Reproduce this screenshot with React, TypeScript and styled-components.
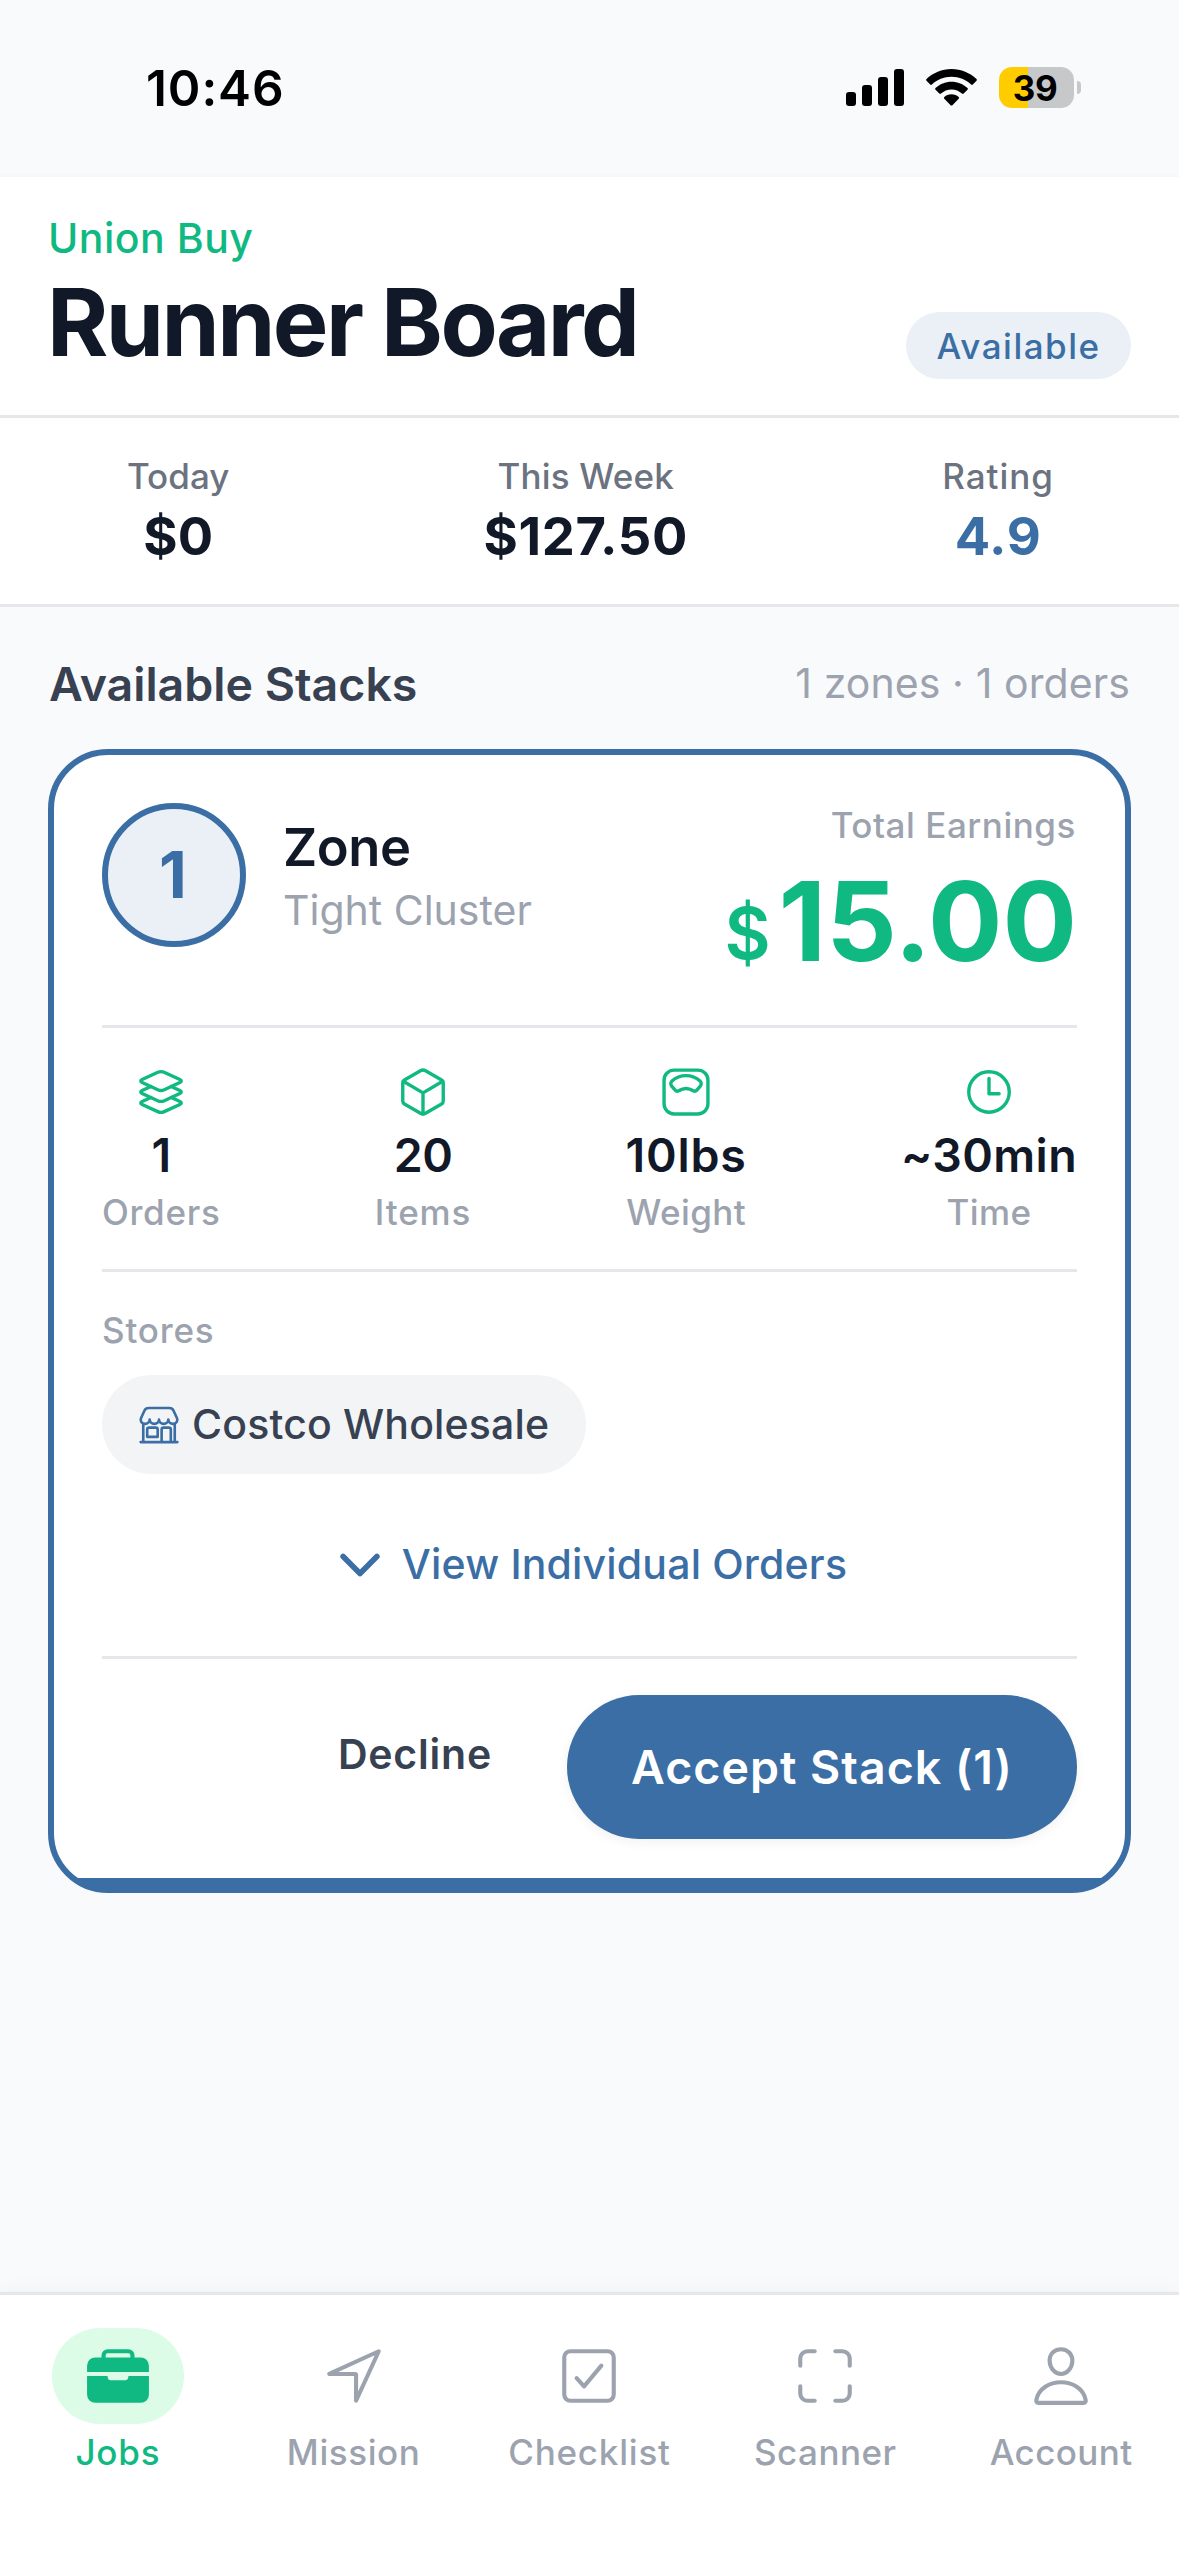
import React from "react";
import styled, { createGlobalStyle } from "styled-components";
import {
  IoBriefcase,
  IoCheckboxOutline,
  IoChevronDown,
  IoCubeOutline,
  IoLayersOutline,
  IoNavigateOutline,
  IoPersonOutline,
  IoScaleOutline,
  IoScanOutline,
  IoStorefrontOutline,
  IoTimeOutline,
} from "react-icons/io5";

const color = {
  ink: "#111827",
  slate: "#374151",
  muted: "#6b7280",
  faint: "#9ca3af",
  line: "#e5e7eb",
  page: "#f9fafb",
  blue: "#3b6ea5",
  blueTint: "#ebf0f6",
  green: "#10b981",
  greenTint: "#dcfce7",
};

const GlobalStyle = createGlobalStyle`
  *, *::before, *::after { box-sizing: border-box; }
  body {
    margin: 0;
    background: ${color.page};
    font-family: Inter, "Liberation Sans", sans-serif;
  }
  button { font: inherit; border: 0; padding: 0; background: none; }
  svg { display: block; flex: none; }
`;

interface TextProps {
  $size: number;
  $line: number;
  $weight?: number;
  $color?: string;
  $track?: number;
}

const Text = styled.span<TextProps>`
  display: block;
  white-space: nowrap;
  font-size: ${(p) => p.$size}px;
  line-height: ${(p) => p.$line}px;
  font-weight: ${(p) => p.$weight ?? 500};
  color: ${(p) => p.$color ?? color.ink};
  letter-spacing: ${(p) => p.$track ?? 0}px;
`;

const Screen = styled.div`
  width: 1179px;
  height: 2556px;
  display: flex;
  flex-direction: column;
  overflow: hidden;
  background: ${color.page};
`;

/* Status bar */

const StatusBar = styled.div`
  height: 177px;
  flex: none;
  display: flex;
  align-items: center;
  justify-content: space-between;
  padding: 0 98px 2px 146px;
`;

const StatusIcons = styled.div`
  display: flex;
  align-items: center;
`;

const WifiSlot = styled.div`
  margin: 0 22px;
`;

const Battery = styled.div`
  width: 75px;
  height: 41px;
  border-radius: 13px;
  display: flex;
  align-items: center;
  justify-content: center;
  padding: 1px 3px 0 0;
  background: linear-gradient(90deg, #ffcc00 39%, #c7c8c9 39%);
`;

const BatteryTip = styled.div`
  width: 4px;
  height: 13px;
  margin-left: 3px;
  border-radius: 0 4px 4px 0;
  background: #c7c8c9;
`;

/* Header */

const Header = styled.header`
  height: 241px;
  flex: none;
  display: flex;
  align-items: flex-end;
  justify-content: space-between;
  padding: 0 48px 36px 47px;
  background: #fff;
  border-bottom: 3px solid ${color.line};
  box-shadow: 0 0 6px rgba(0, 0, 0, 0.03);
`;

const Titles = styled.div`
  display: flex;
  flex-direction: column;
  gap: 2px;
`;

const Brand = styled(Text)`
  padding-left: 1px;
`;

const Title = styled.h1`
  margin: 0;
  white-space: nowrap;
  font-size: 93.5px;
  line-height: 114px;
  font-weight: 700;
  letter-spacing: -2.55px;
  color: ${color.ink};
`;

const StatusPill = styled.div`
  width: 225px;
  height: 67px;
  border-radius: 34px;
  display: flex;
  align-items: center;
  justify-content: center;
  padding-top: 2px;
  background: ${color.blueTint};
`;

const Summary = styled.section`
  height: 189px;
  flex: none;
  display: flex;
  justify-content: space-between;
  padding: 36px 125px 0 127px;
  background: #fff;
  border-bottom: 3px solid ${color.line};
`;

const Stat = styled.div`
  display: flex;
  flex-direction: column;
  align-items: center;
`;

/* Stacks list */

const Main = styled.main`
  flex: 1;
  padding: 48px 48px 0;
`;

const SectionHead = styled.div`
  display: flex;
  justify-content: space-between;
  padding: 0 1px;
  margin-bottom: 36px;
`;

/* The thick bottom accent is painted under the border so both read as one shape. */
const Card = styled.article`
  border: 6px solid ${color.blue};
  border-radius: 60px;
  padding: 48px;
  background:
    linear-gradient(${color.blue}, ${color.blue}) bottom / 100% 15px no-repeat border-box,
    #fff;
`;

const CardHead = styled.div`
  height: 225px;
  display: flex;
  align-items: flex-start;
  justify-content: space-between;
  border-bottom: 3px solid ${color.line};
`;

const Zone = styled.div`
  display: flex;
  gap: 37px;
`;

const ZoneBadge = styled.div`
  width: 144px;
  height: 144px;
  border: 6px solid ${color.blue};
  border-radius: 50%;
  display: flex;
  align-items: center;
  justify-content: center;
  padding-right: 2px;
  background: ${color.blueTint};
`;

const ZoneName = styled.div`
  padding-top: 7px;
`;

const Earnings = styled.div`
  display: flex;
  flex-direction: column;
  align-items: flex-end;
`;

const EarningsLabel = styled(Text)`
  padding-right: 1px;
`;

const Amount = styled.div`
  display: flex;
  align-items: center;
  gap: 8px;
`;

const Currency = styled(Text)`
  margin-top: 24px;
`;

const Metrics = styled.div`
  display: flex;
  justify-content: space-between;
  padding: 37px 0 35px;
  border-bottom: 3px solid ${color.line};
`;

const Metric = styled.div`
  display: flex;
  flex-direction: column;
  align-items: center;
  color: ${color.green};
`;

const Stores = styled.div`
  display: flex;
  flex-direction: column;
  align-items: flex-start;
  gap: 23px;
  padding-top: 37px;
`;

const StoreChip = styled.div`
  height: 99px;
  border-radius: 50px;
  display: flex;
  align-items: center;
  gap: 12px;
  padding: 0 37px 0 36px;
  background: #f3f4f6;
  color: ${color.blue};
`;

const StoreName = styled(Text)`
  padding-bottom: 2px;
`;

const Expander = styled.button`
  width: 100%;
  height: 182px;
  display: flex;
  align-items: center;
  justify-content: center;
  gap: 12px;
  padding-right: 2px;
  color: ${color.blue};
`;

const ExpanderLabel = styled(Text)`
  padding-bottom: 2px;
`;

const Actions = styled.div`
  display: flex;
  align-items: flex-start;
  justify-content: flex-end;
  gap: 36px;
  padding-top: 36px;
  border-top: 3px solid ${color.line};
`;

const DeclineButton = styled.button`
  padding: 0 39px;
`;

const AcceptButton = styled.button`
  width: 510px;
  height: 144px;
  border-radius: 72px;
  display: flex;
  align-items: center;
  justify-content: center;
  background: ${color.blue};
  box-shadow: 0 3px 12px rgba(0, 0, 0, 0.06);
`;

/* Tab bar */

const TabBar = styled.nav`
  height: 264px;
  flex: none;
  display: grid;
  grid-template-columns: repeat(5, 1fr);
  padding-top: 33px;
  background: #fff;
  border-top: 3px solid ${color.line};
  box-shadow: 0 -3px 18px rgba(0, 0, 0, 0.035);
`;

const Tab = styled.div<{ $active?: boolean }>`
  display: flex;
  flex-direction: column;
  align-items: center;
  gap: 7px;
  color: ${(p) => (p.$active ? color.green : color.faint)};
`;

const TabIcon = styled.div<{ $active?: boolean }>`
  width: 132px;
  height: 96px;
  border-radius: 48px;
  display: flex;
  align-items: center;
  justify-content: center;
  background: ${(p) => (p.$active ? color.greenTint : "transparent")};
`;

const Signal = () => (
  <svg width="58" height="37" viewBox="0 0 58 37">
    <rect x="0" y="23" width="10" height="14" rx="3" />
    <rect x="16" y="16" width="10" height="21" rx="3" />
    <rect x="32" y="8" width="10" height="29" rx="3" />
    <rect x="48" y="0" width="10" height="37" rx="3" />
  </svg>
);

const Wifi = () => (
  <svg width="51" height="37" viewBox="0 0 51 37">
    <path d="M25.5 0C35.2 0 44 3.800 50.500 10.100c.5.5.5 1.200 0 1.700l-3.700 3.700c-.5.5-1.200.5-1.700 0C40 10.600 33.100 7.700 25.500 7.700S11 10.600 5.900 15.500c-.5.5-1.200.5-1.700 0L.5 11.800c-.5-.5-.5-1.200 0-1.700C7 3.800 15.800 0 25.500 0Z" />
    <path d="M25.500 12.700c6.200 0 11.800 2.400 16 6.300.5.500.5 1.200 0 1.700l-3.800 3.800c-.4.500-1.200.5-1.700 0-2.800-2.500-6.500-4.100-10.500-4.100s-7.700 1.600-10.500 4.100c-.5.500-1.300.5-1.700 0l-3.800-3.800c-.5-.5-.5-1.200 0-1.700 4.200-3.900 9.800-6.300 16-6.300Z" />
    <path d="M25.500 25.300c2.800 0 5.300 1 7.200 2.700.5.500.5 1.200 0 1.700l-6.300 6.500c-.5.500-1.300.5-1.800 0l-6.300-6.500c-.5-.5-.5-1.200 0-1.700 1.900-1.700 4.400-2.700 7.200-2.700Z" />
  </svg>
);

const stats = [
  { label: "Today", track: 0, value: "$0", valueTrack: 0, tone: color.ink },
  { label: "This Week", track: 0.2, value: "$127.50", valueTrack: 0.6, tone: color.ink },
  { label: "Rating", track: 1.0, value: "4.9", valueTrack: 0.7, tone: color.blue },
];

const metrics = [
  { Icon: IoLayersOutline, value: "1", valueTrack: 0, label: "Orders", track: 0.7 },
  { Icon: IoCubeOutline, value: "20", valueTrack: -0.5, label: "Items", track: 0.9 },
  { Icon: IoScaleOutline, value: "10lbs", valueTrack: 0.8, label: "Weight", track: 0.4 },
  { Icon: IoTimeOutline, value: "~30min", valueTrack: 0.4, label: "Time", track: 0.4 },
];

const tabs = [
  { Icon: IoBriefcase, label: "Jobs", track: 0.8, active: true },
  { Icon: IoNavigateOutline, label: "Mission", track: 0.6 },
  { Icon: IoCheckboxOutline, label: "Checklist", track: 0.8 },
  { Icon: IoScanOutline, label: "Scanner", track: 0.5 },
  { Icon: IoPersonOutline, label: "Account", track: 0.4 },
];

export default function App() {
  return (
    <Screen>
      <GlobalStyle />

      <StatusBar>
        <Text $size={49.5} $line={60} $weight={600} $color="#000" $track={0.9}>
          10:46
        </Text>
        <StatusIcons>
          <Signal />
          <WifiSlot>
            <Wifi />
          </WifiSlot>
          <Battery>
            <Text $size={35} $line={40} $weight={700} $color="#000" $track={-0.4}>
              39
            </Text>
          </Battery>
          <BatteryTip />
        </StatusIcons>
      </StatusBar>

      <Header>
        <Titles>
          <Brand $size={41} $line={50} $color={color.green} $track={0.5}>
            Union Buy
          </Brand>
          <Title>Runner Board</Title>
        </Titles>
        <StatusPill>
          <Text $size={35} $line={43} $color={color.blue} $track={1.5}>
            Available
          </Text>
        </StatusPill>
      </Header>

      <Summary>
        {stats.map((s) => (
          <Stat key={s.label}>
            <Text $size={35} $line={44} $color={color.muted} $track={s.track}>
              {s.label}
            </Text>
            <Text $size={52.5} $line={77} $weight={700} $color={s.tone} $track={s.valueTrack}>
              {s.value}
            </Text>
          </Stat>
        ))}
      </Summary>

      <Main>
        <SectionHead>
          <Text $size={46.5} $line={58} $weight={600} $color={color.slate}>
            Available Stacks
          </Text>
          <Text $size={41} $line={56} $weight={400} $color={color.faint} $track={0.09}>
            1 zones · 1 orders
          </Text>
        </SectionHead>

        <Card>
          <CardHead>
            <Zone>
              <ZoneBadge>
                <Text $size={64.5} $line={78} $weight={700} $color={color.blue}>
                  1
                </Text>
              </ZoneBadge>
              <ZoneName>
                <Text $size={52.5} $line={75} $weight={600} $track={-0.44}>
                  Zone
                </Text>
                <Text $size={41} $line={51} $weight={400} $color={color.faint}>
                  Tight Cluster
                </Text>
              </ZoneName>
            </Zone>
            <Earnings>
              <EarningsLabel $size={35} $line={45} $color={color.faint} $track={0.54}>
                Total Earnings
              </EarningsLabel>
              <Amount>
                <Currency $size={71} $line={86} $weight={600} $color={color.green}>
                  $
                </Currency>
                <Text $size={110.5} $line={146} $weight={700} $color={color.green}>
                  15.00
                </Text>
              </Amount>
            </Earnings>
          </CardHead>

          <Metrics>
            {metrics.map(({ Icon, value, valueTrack, label, track }) => (
              <Metric key={label}>
                <Icon size={54} />
                <Text $size={46.5} $line={72} $weight={600} $track={valueTrack}>
                  {value}
                </Text>
                <Text $size={35} $line={43} $color={color.faint} $track={track}>
                  {label}
                </Text>
              </Metric>
            ))}
          </Metrics>

          <Stores>
            <Text $size={35} $line={43} $color={color.faint} $track={0.8}>
              Stores
            </Text>
            <StoreChip>
              <IoStorefrontOutline size={42} />
              <StoreName $size={41} $line={50} $color={color.slate} $track={0.17}>
                Costco Wholesale
              </StoreName>
            </StoreChip>
          </Stores>

          <Expander>
            <IoChevronDown size={60} />
            <ExpanderLabel $size={41} $line={50} $color={color.blue} $track={0.17}>
              View Individual Orders
            </ExpanderLabel>
          </Expander>

          <Actions>
            <DeclineButton>
              <Text $size={41} $line={118} $weight={600} $color={color.slate} $track={0.8}>
                Decline
              </Text>
            </DeclineButton>
            <AcceptButton>
              <Text $size={46.5} $line={56} $weight={600} $color="#fff" $track={1.01}>
                Accept Stack (1)
              </Text>
            </AcceptButton>
          </Actions>
        </Card>
      </Main>

      <TabBar>
        {tabs.map(({ Icon, label, track, active }) => (
          <Tab key={label} $active={active}>
            <TabIcon $active={active}>
              <Icon size={66} />
            </TabIcon>
            <Text $size={35} $line={43} $color="inherit" $track={track}>
              {label}
            </Text>
          </Tab>
        ))}
      </TabBar>
    </Screen>
  );
}
